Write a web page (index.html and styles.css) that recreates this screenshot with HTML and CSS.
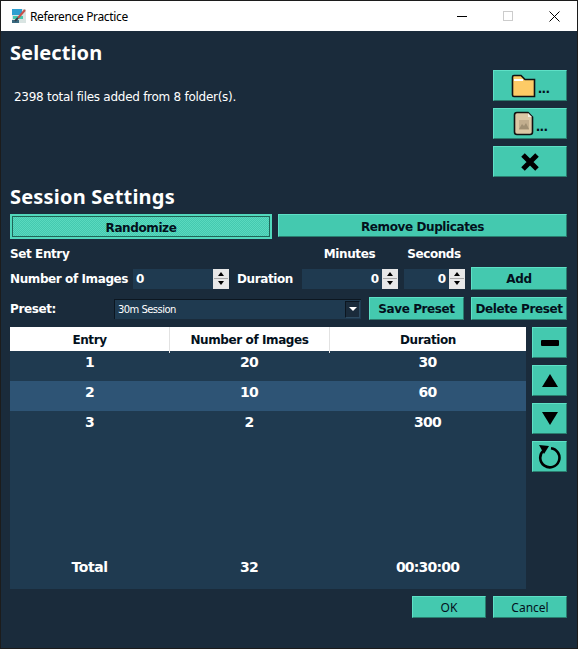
FILE: index.html
```html
<!DOCTYPE html>
<html lang="en">
<head>
    <meta charset="UTF-8" />
    <meta name="viewport" content="width=device-width, initial-scale=1" />
    <title>Reference Practice</title>
    <link rel="stylesheet" href="styles.css">
</head>
<body>
<div class="window">
    <header class="titlebar">
        <svg class="app-icon" width="16" height="16" viewBox="0 0 16 16">
            <rect x="1" y="1" width="14" height="14" fill="#d9e4e2"/>
            <rect x="1" y="1" width="10" height="6" fill="#2f9fd0"/>
            <rect x="2" y="8" width="10" height="3" fill="#45c9af"/>
            <rect x="1" y="12" width="7" height="3" fill="#3a6a80"/>
            <path d="M14 2 L7 10" stroke="#c8504a" stroke-width="2"/>
            <path d="M7 10 L4 13" stroke="#33404c" stroke-width="2"/>
        </svg>
        <span class="title-text">Reference Practice</span>
        <div class="win-controls">
            <svg width="10" height="10" viewBox="0 0 10 10"><path d="M0 5.5H10" stroke="#000"/></svg>
            <svg width="10" height="10" viewBox="0 0 10 10"><rect x=".5" y=".5" width="9" height="9" fill="none" stroke="#ccc"/></svg>
            <svg width="11" height="11" viewBox="0 0 11 11"><path d="M.5 .5L10.5 10.5M10.5 .5L.5 10.5" stroke="#000"/></svg>
        </div>
    </header>

    <main class="content">
        <h2>Selection</h2>
        <section class="selection">
            <p class="file-count">2398 total files added from 8 folder(s).</p>
            <div class="pick-buttons">
                <button class="btn pick">
                    <svg width="25" height="24" viewBox="0 0 25 24">
                        <path d="M1.5 3 Q1.5 1.5 3 1.5H10L14 5.5H23.5V22.5H3Q1.5 22.5 1.5 21Z" fill="#fdcb66" stroke="#111" stroke-width="1.6"/>
                        <path d="M3 6H12" stroke="#fff" stroke-width="2"/>
                    </svg>
                    <span class="dots">...</span>
                </button>
                <button class="btn pick">
                    <svg width="21" height="25" viewBox="0 0 21 25">
                        <path d="M4 1.5H15L19.5 6V21Q19.5 23.5 17 23.5H4Q1.5 23.5 1.5 21V4Q1.5 1.5 4 1.5Z" fill="#dcc7a4" stroke="#111" stroke-width="1.6"/>
                        <path d="M15 2V6H19" fill="#f5efe2"/>
                        <rect x="6" y="9" width="10" height="10" fill="#c2ae8e"/>
                        <path d="M6 18L9 13L11 15L13 12L16 18Z" fill="#a08f72"/>
                    </svg>
                    <span class="dots">...</span>
                </button>
                <button class="btn pick">
                    <svg width="20" height="20" viewBox="0 0 20 20"><path d="M3 3L17 17M17 3L3 17" stroke="#000" stroke-width="5"/></svg>
                </button>
            </div>
        </section>

        <h2 class="settings-heading">Session Settings</h2>
        <div class="toggle-row">
            <button class="btn randomize">Randomize</button>
            <button class="btn duplicates">Remove Duplicates</button>
        </div>

        <div class="entry-grid">
            <span class="label">Set Entry</span>
            <span></span>
            <span></span>
            <span class="label centered">Minutes</span>
            <span class="label centered">Seconds</span>
            <span></span>

            <span class="label field-label">Number of Images</span>
            <div class="spin">
                <input class="spin-input" type="text" value="0">
                <div class="spin-arrows"><i class="up"></i><i class="down"></i></div>
            </div>
            <span class="label field-label duration">Duration</span>
            <div class="spin">
                <input class="spin-input right" type="text" value="0">
                <div class="spin-arrows"><i class="up"></i><i class="down"></i></div>
            </div>
            <div class="spin seconds">
                <input class="spin-input right" type="text" value="0">
                <div class="spin-arrows"><i class="up"></i><i class="down"></i></div>
            </div>
            <button class="btn add">Add</button>
        </div>

        <div class="preset-row">
            <span class="label preset-label">Preset:</span>
            <div class="combo">
                <span>30m Session</span>
                <span class="combo-arrow"><i></i></span>
            </div>
            <button class="btn save">Save Preset</button>
            <button class="btn delete">Delete Preset</button>
        </div>

        <div class="table-row">
            <div class="entries">
                <div class="entries-head">
                    <span>Entry</span><span>Number of Images</span><span>Duration</span>
                </div>
                <div class="entry"><span>1</span><span>20</span><span>30</span></div>
                <div class="entry selected"><span>2</span><span>10</span><span>60</span></div>
                <div class="entry"><span>3</span><span>2</span><span>300</span></div>
                <div class="entry total"><span>Total</span><span>32</span><span>00:30:00</span></div>
            </div>
            <div class="side-buttons">
                <button class="btn side"><svg width="18" height="6" viewBox="0 0 18 6"><rect width="18" height="6" rx="1"/></svg></button>
                <button class="btn side"><svg width="16" height="13" viewBox="0 0 16 13"><path d="M8 0L16 13H0Z"/></svg></button>
                <button class="btn side"><svg width="16" height="13" viewBox="0 0 16 13"><path d="M0 0H16L8 13Z"/></svg></button>
                <button class="btn side">
                    <svg width="24" height="24" viewBox="0 0 24 24" fill="none">
                        <path d="M13 3.2A9.6 9.6 0 1 1 5.4 5.6" stroke="#000" stroke-width="2.6"/>
                        <path d="M1 0L11 1L6 9Z" fill="#000"/>
                    </svg>
                </button>
            </div>
        </div>

        <footer class="dialog-buttons">
            <button class="btn plain">OK</button>
            <button class="btn plain">Cancel</button>
        </footer>
    </main>
</div>
</body>
</html>
```

FILE: styles.css
```css
* { box-sizing: border-box; }
body { margin: 0; font-family: "DejaVu Sans", sans-serif; color: #fff; background: #1a2b3b; }

.window { width: 578px; height: 649px; border: 1px solid #1c1c1c; display: flex; flex-direction: column; background: #1a2b3b; }

.titlebar { height: 30px; background: #fff; color: #000; display: flex; align-items: center; padding-left: 10px; font-family: "Noto Sans", sans-serif; font-size: 12px; }
.app-icon { margin-right: 3px; }
.title-text { letter-spacing: -0.35px; }
.win-controls { margin-left: auto; display: flex; align-items: center; }
.win-controls svg { margin-right: 36px; }
.win-controls svg:last-child { margin-right: 17px; }

.content { flex: 1; padding: 10px 10px 30px 9px; display: flex; flex-direction: column; }

h2 { margin: 0; font-family: "Noto Sans", sans-serif; font-size: 20px; line-height: 24px; font-weight: bold; letter-spacing: 0.1px; }
.settings-heading { margin-top: 8px; letter-spacing: 0.2px; }

.selection { display: flex; justify-content: space-between; margin-top: 5px; }
.file-count { margin: 20px 0 0 4px; font-size: 12px; line-height: 14px; letter-spacing: -0.27px; }
.pick-buttons { display: flex; flex-direction: column; gap: 7px; }

.btn { display: flex; align-items: center; justify-content: center; padding: 0; background: #44c9af; color: #03101c; font-family: "DejaVu Sans", sans-serif; font-size: 12px; font-weight: bold; letter-spacing: -0.4px; border: 1px solid; border-color: #5ee0c6 #2a7d6e #2a7d6e #5ee0c6; }

.pick { width: 74px; height: 31px; }
.dots { align-self: flex-end; margin: 0 0 4px 2px; font-size: 12px; line-height: 14px; letter-spacing: -0.8px; }

.toggle-row { display: flex; gap: 6px; margin-top: 5px; height: 25px; align-items: flex-start; }
.randomize { width: 262px; height: 25px; padding-top: 2px; border: 2px solid #52d8bc; outline: 1px solid #1f6658; outline-offset: -3px; background: repeating-conic-gradient(#44c9af 0 25%, #5ad9bf 0 50%) 0 0 / 2px 2px; }
.duplicates { flex: 1; height: 23px; padding-top: 2px; }

.entry-grid { display: grid; grid-template-columns: 123px 96px 73px 96px 73px 96px; grid-template-rows: 16px 23px; row-gap: 5px; margin-top: 7px; align-items: center; }
.label { font-size: 12px; font-weight: bold; line-height: 16px; white-space: nowrap; letter-spacing: -0.4px; }
.field-label { padding-top: 1px; }
.centered { text-align: center; padding-right: 1px; }
.entry-grid .duration { padding-left: 8px; }
.add { height: 23px; padding-top: 1px; }

.spin { display: flex; height: 20px; background: #1f3a50; }
.spin.seconds { margin: 0 6px; }
.spin-input { flex: 1; min-width: 0; border: 0; background: none; padding: 0 3px; color: #fff; font-family: "DejaVu Sans", sans-serif; font-size: 12px; font-weight: bold; }
.spin-input.right { text-align: right; }
.spin-arrows { width: 16px; display: flex; flex-direction: column; gap: 1px; background: #a8a8a8; border: 1px solid #e6e6e6; }
.spin-arrows i { flex: 1; display: flex; align-items: center; justify-content: center; background: #e8e8e8; }
.spin-arrows i::after { content: ""; border-left: 3px solid transparent; border-right: 3px solid transparent; }
.spin-arrows .up::after { border-bottom: 4px solid #000; }
.spin-arrows .down::after { border-top: 4px solid #000; }

.preset-row { display: flex; align-items: center; margin-top: 7px; height: 23px; }
.preset-label { width: 104px; padding-top: 1px; }
.combo { width: 247px; height: 20px; display: flex; align-items: center; justify-content: space-between; background: #1f3a50; border-top: 1px solid #0c1620; border-left: 1px solid #0c1620; padding-left: 3px; font-size: 10px; letter-spacing: -0.55px; }
.combo-arrow { width: 15px; height: 17px; margin-right: 1px; display: flex; align-items: center; justify-content: center; background: #1a2b3b; border: 1px solid; border-color: #0c1620 #2d4a60 #2d4a60 #0c1620; }
.combo-arrow i { border-left: 4px solid transparent; border-right: 4px solid transparent; border-top: 4px solid #fff; }
.save { width: 95px; height: 23px; margin-left: 8px; }
.delete { width: 96px; height: 23px; margin-left: 7px; }

.table-row { display: flex; gap: 6px; margin-top: 7px; height: 262px; }
.entries { flex: 1; display: flex; flex-direction: column; background: #1f3a50; font-size: 14px; font-weight: bold; letter-spacing: -0.8px; }
.entries-head, .entry { display: grid; grid-template-columns: 159px 160px 197px; text-align: center; }
.entries-head { height: 24px; align-items: center; background: #fff; color: #03101c; font-size: 12px; letter-spacing: -0.4px; }
.entries-head span { line-height: 26px; }
.entries-head span + span { border-left: 1px solid #e2e2e2; }
.entry { height: 30px; padding-top: 2px; line-height: 19px; }
.entry.selected { background: #2e5475; }
.entry.total { margin-top: auto; height: 44px; align-items: center; padding-top: 0; }
.total span:first-child { letter-spacing: -0.4px; }
.side-buttons { display: flex; flex-direction: column; gap: 7px; }
.side { width: 35px; height: 31px; }

.dialog-buttons { display: flex; justify-content: flex-end; gap: 7px; margin-top: 7px; }
.plain { width: 74px; height: 22px; font-family: "Noto Sans", sans-serif; font-size: 12px; font-weight: normal; letter-spacing: 0; }
```
